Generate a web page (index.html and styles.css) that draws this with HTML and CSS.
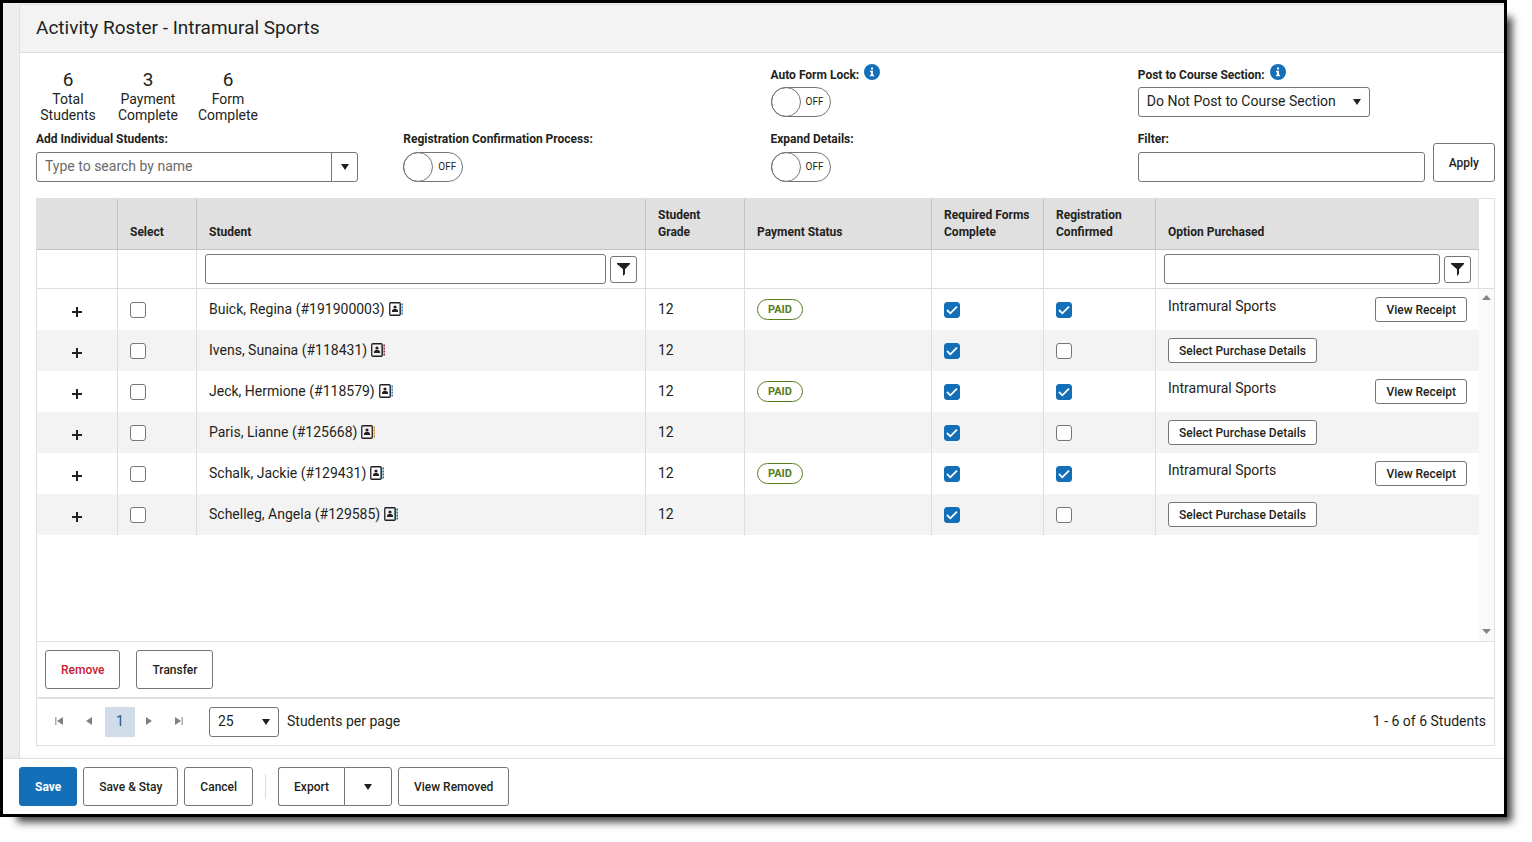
FILE: index.html
```html
<!DOCTYPE html>
<html lang="en">
<head>
<meta charset="utf-8">
<title>Activity Roster - Intramural Sports</title>
<link rel="stylesheet" href="styles.css">
</head>
<body>
<svg class="sprite" aria-hidden="true">
  <symbol id="info" viewBox="0 0 16 16"><circle cx="8" cy="8" r="8" fill="#146fb9"/><path d="M7 3.6h2v2H7zM6 6.800h3v4h1.100v1.400H5.900v-1.400H7V8.200H6z" fill="#fff"/></symbol>
  <symbol id="caret" viewBox="0 0 8 6"><path d="M0 0h8L4 6z" fill="currentColor"/></symbol>
  <symbol id="scroll" viewBox="0 0 9 5"><path d="M0 0h9L4.500 5z" fill="currentColor"/></symbol>
  <symbol id="funnel" viewBox="0 0 13 13"><path d="M0 0h13v1L8 6.200V11l-2 2V6.200L0 1z" fill="currentColor"/></symbol>
  <symbol id="plus" viewBox="0 0 10 10"><path d="M4 0h2v4h4v2H6v4H4V6H0V4h4z" fill="currentColor"/></symbol>
  <symbol id="contact" viewBox="0 0 14 14"><rect x=".75" y=".75" width="10.500" height="12.500" rx="1" fill="none" stroke="#231f20" stroke-width="1.300"/><circle cx="6" cy="5" r="1.600" fill="#231f20"/><path d="M3 10V9c0-1.400 1.300-2 3-2s3 .6 3 2v1z" fill="#231f20"/><path d="M10.400 1.500v11" stroke="currentColor" stroke-width=".6"/><path d="M13.200 1.500v2M13.200 4.500v2M13.200 7.500v2M13.200 10.500v2" stroke="currentColor" stroke-width="1.600"/></symbol>
  <symbol id="prev" viewBox="0 0 8 8"><path d="M7 0v8L1 4z" fill="currentColor"/></symbol>
  <symbol id="next" viewBox="0 0 8 8"><path d="M1 0v8l6-4z" fill="currentColor"/></symbol>
  <symbol id="first" viewBox="0 0 8 8"><path d="M8 0v8L2 4z" fill="currentColor"/><path d="M0 0h1.500v8H0z" fill="#aaa"/></symbol>
  <symbol id="last" viewBox="0 0 8 8"><path d="M0 0v8l6-4z" fill="currentColor"/><path d="M6.500 0H8v8H6.500z" fill="#aaa"/></symbol>
</svg>
<div class="window">
  <main class="card">
    <header class="card-head"><h1>Activity Roster - Intramural Sports</h1></header>
    <section class="controls">
      <div class="stats">
        <div class="stat"><strong>6</strong>Total Students</div>
        <div class="stat"><strong>3</strong>Payment Complete</div>
        <div class="stat"><strong>6</strong>Form Complete</div>
      </div>
      <div class="field top third">
        <div class="label-row"><label for="lock">Auto Form Lock:</label><svg class="info"><use href="#info"/></svg></div>
        <div class="switch"><input type="checkbox" role="switch" id="lock"><span>OFF</span></div>
      </div>
      <div class="field top">
        <div class="label-row"><label for="post">Post to Course Section:</label><svg class="info"><use href="#info"/></svg></div>
        <div class="select post"><select id="post"><option>Do Not Post to Course Section</option></select><svg class="caret"><use href="#caret"/></svg></div>
      </div>
      <div class="field">
        <label for="add">Add Individual Students:</label>
        <div class="combo"><input type="text" id="add" placeholder="Type to search by name"><button type="button" aria-label="Show students"><svg class="caret"><use href="#caret"/></svg></button></div>
      </div>
      <div class="field">
        <label for="reg">Registration Confirmation Process:</label>
        <div class="switch"><input type="checkbox" role="switch" id="reg"><span>OFF</span></div>
      </div>
      <div class="field">
        <label for="expand">Expand Details:</label>
        <div class="switch"><input type="checkbox" role="switch" id="expand"><span>OFF</span></div>
      </div>
      <div class="filter">
        <div class="field grow"><label for="filter">Filter:</label><input class="box" type="text" id="filter"></div>
        <button type="button" class="btn">Apply</button>
      </div>
    </section>

    <section class="roster">
      <div class="roster-body">
        <div class="table-wrap">
          <table>
            <colgroup><col class="c-plus"><col class="c-select"><col><col class="c-grade"><col class="c-pay"><col class="c-flag"><col class="c-flag"><col class="c-option"></colgroup>
            <thead>
              <tr class="heads"><th></th><th>Select</th><th>Student</th><th>Student<br>Grade</th><th>Payment Status</th><th>Required Forms Complete</th><th>Registration Confirmed</th><th>Option Purchased</th></tr>
              <tr class="filters"><td></td><td></td>
                <td><div class="col-filter"><input class="box" type="text" aria-label="Filter by student"><button type="button" aria-label="Student filter"><svg><use href="#funnel"/></svg></button></div></td>
                <td></td><td></td><td></td><td></td>
                <td><div class="col-filter"><input class="box" type="text" aria-label="Filter by option"><button type="button" aria-label="Option filter"><svg><use href="#funnel"/></svg></button></div></td></tr>
            </thead>
            <tbody>
              <tr><td class="plus"><button type="button" aria-label="Expand row"><svg><use href="#plus"/></svg></button></td><td><input type="checkbox" aria-label="Select Buick, Regina"></td><td class="text">Buick, Regina (#191900003)<svg class="contact blue"><use href="#contact"/></svg></td><td class="text">12</td><td><span class="paid">PAID</span></td><td><input type="checkbox" checked aria-label="Forms complete"></td><td><input type="checkbox" checked aria-label="Confirmed"></td><td><div class="option"><span>Intramural Sports</span><button type="button" class="small">View Receipt</button></div></td></tr>
              <tr><td class="plus"><button type="button" aria-label="Expand row"><svg><use href="#plus"/></svg></button></td><td><input type="checkbox" aria-label="Select Ivens, Sunaina"></td><td class="text">Ivens, Sunaina (#118431)<svg class="contact plum"><use href="#contact"/></svg></td><td class="text">12</td><td></td><td><input type="checkbox" checked aria-label="Forms complete"></td><td><input type="checkbox" aria-label="Confirmed"></td><td><div class="option"><button type="button" class="small">Select Purchase Details</button></div></td></tr>
              <tr><td class="plus"><button type="button" aria-label="Expand row"><svg><use href="#plus"/></svg></button></td><td><input type="checkbox" aria-label="Select Jeck, Hermione"></td><td class="text">Jeck, Hermione (#118579)<svg class="contact blue"><use href="#contact"/></svg></td><td class="text">12</td><td><span class="paid">PAID</span></td><td><input type="checkbox" checked aria-label="Forms complete"></td><td><input type="checkbox" checked aria-label="Confirmed"></td><td><div class="option"><span>Intramural Sports</span><button type="button" class="small">View Receipt</button></div></td></tr>
              <tr><td class="plus"><button type="button" aria-label="Expand row"><svg><use href="#plus"/></svg></button></td><td><input type="checkbox" aria-label="Select Paris, Lianne"></td><td class="text">Paris, Lianne (#125668)<svg class="contact amber"><use href="#contact"/></svg></td><td class="text">12</td><td></td><td><input type="checkbox" checked aria-label="Forms complete"></td><td><input type="checkbox" aria-label="Confirmed"></td><td><div class="option"><button type="button" class="small">Select Purchase Details</button></div></td></tr>
              <tr><td class="plus"><button type="button" aria-label="Expand row"><svg><use href="#plus"/></svg></button></td><td><input type="checkbox" aria-label="Select Schalk, Jackie"></td><td class="text">Schalk, Jackie (#129431)<svg class="contact teal"><use href="#contact"/></svg></td><td class="text">12</td><td><span class="paid">PAID</span></td><td><input type="checkbox" checked aria-label="Forms complete"></td><td><input type="checkbox" checked aria-label="Confirmed"></td><td><div class="option"><span>Intramural Sports</span><button type="button" class="small">View Receipt</button></div></td></tr>
              <tr><td class="plus"><button type="button" aria-label="Expand row"><svg><use href="#plus"/></svg></button></td><td><input type="checkbox" aria-label="Select Schelleg, Angela"></td><td class="text">Schelleg, Angela (#129585)<svg class="contact teal"><use href="#contact"/></svg></td><td class="text">12</td><td></td><td><input type="checkbox" checked aria-label="Forms complete"></td><td><input type="checkbox" aria-label="Confirmed"></td><td><div class="option"><button type="button" class="small">Select Purchase Details</button></div></td></tr>
            </tbody>
          </table>
        </div>
        <div class="gutter">
          <div class="gutter-head"></div>
          <div class="track"><svg class="up"><use href="#scroll"/></svg><svg><use href="#scroll"/></svg></div>
        </div>
      </div>
      <div class="toolbar">
        <button type="button" class="btn danger">Remove</button>
        <button type="button" class="btn">Transfer</button>
      </div>
      <nav class="pager" aria-label="Pages">
        <button type="button" aria-label="First page"><svg><use href="#first"/></svg></button>
        <button type="button" aria-label="Previous page"><svg><use href="#prev"/></svg></button>
        <button type="button" class="current">1</button>
        <button type="button" aria-label="Next page"><svg><use href="#next"/></svg></button>
        <button type="button" aria-label="Last page"><svg><use href="#last"/></svg></button>
        <div class="select size"><select id="size"><option>25</option></select><svg class="caret"><use href="#caret"/></svg></div>
        <label for="size">Students per page</label>
        <span class="count">1 - 6 of 6 Students</span>
      </nav>
    </section>
  </main>
  <footer class="actions">
    <button type="button" class="btn primary">Save</button>
    <button type="button" class="btn">Save &amp; Stay</button>
    <button type="button" class="btn">Cancel</button>
    <span class="divider"></span>
    <div class="split"><button type="button" class="btn">Export</button><button type="button" class="btn more" aria-label="More export options"><svg class="caret"><use href="#caret"/></svg></button></div>
    <button type="button" class="btn">View Removed</button>
  </footer>
</div>
</body>
</html>
```

FILE: styles.css
```css
*, *::before { box-sizing: border-box; }

body {
  margin: 0;
  background: #fff;
  color: #231f20;
  font: 14px/18px Roboto, "Liberation Sans", sans-serif;
}

button, input, select { font: inherit; color: inherit; margin: 0; }
button { padding: 0; border: 0; background: none; cursor: pointer; }
svg { display: block; flex: none; }
.sprite { position: absolute; width: 0; height: 0; }

.window {
  display: flex;
  flex-direction: column;
  min-height: calc(100vh - 25px);
  margin: 0 25px 25px 0;
  border: 3px solid #000;
  background: #eee;
  box-shadow: 11px 11px 8px -6px rgba(0, 0, 0, .75);
}

.card {
  display: flex;
  flex: 1;
  flex-direction: column;
  margin: 1px 0 0 16px;
  padding-bottom: 12px;
  border: 1px solid #e0e0e0;
  border-width: 1px 0 0 1px;
  border-radius: 4px 0 0 0;
  background: #fff;
}

.card-head { padding: 11px 16px 12px; border-bottom: 1px solid #dcdcdc; background: #f3f3f3; border-radius: 4px 0 0 0; }
h1 { margin: 0; font-size: 19px; font-weight: 400; line-height: 24px; }

/* Controls */
.controls {
  display: grid;
  grid-template-columns: repeat(4, 1fr);
  gap: 8px 1px;
  padding: 11px 0 16px 16px;
}
.stats { display: flex; gap: 16px; padding-top: 5px; }
.stat { width: 64px; text-align: center; line-height: 16px; }
.stat strong { display: block; font-size: 19px; font-weight: 400; line-height: 22px; }
.third { grid-column: 3; }
.field { display: flex; flex-direction: column; align-items: flex-start; gap: 5px; }
.field.top { gap: 4px; }
.field.grow { flex: 1; }
.field label { font-size: 12px; font-weight: 700; line-height: 16px; }
.label-row { display: flex; align-items: flex-end; gap: 5px; height: 19px; }
.info { width: 16px; height: 16px; align-self: flex-start; }
.caret { width: 8px; height: 6px; }

.box { width: 100%; height: 30px; padding: 0 8px; border: 1px solid #767676; border-radius: 3px; background: #fff; }

.switch { display: grid; width: 60px; height: 30px; }
.switch input, .switch span { grid-area: 1 / 1; }
.switch input { appearance: none; width: 60px; height: 30px; border: 1px solid #767676; border-radius: 15px; background: #fff; }
.switch input::before { content: ""; display: block; width: 30px; height: 30px; margin: -1px; border: 1px solid #767676; border-radius: 50%; }
.switch span { align-self: center; justify-self: end; padding-right: 7px; font-size: 10px; pointer-events: none; }

.select { display: grid; align-items: center; height: 30px; }
.select select, .select svg { grid-area: 1 / 1; }
.select select { appearance: none; width: 100%; height: 30px; padding: 0 32px 2px 8px; border: 1px solid #767676; border-radius: 3px; background: #fff; }
.select svg { justify-self: end; margin-right: 9px; pointer-events: none; }
.post { width: 232px; }
.size { width: 70px; margin: 0 8px 0 14px; }

.combo { display: flex; width: calc(100% - 44px); height: 30px; border: 1px solid #767676; border-radius: 3px; }
.combo input { flex: 1; min-width: 0; padding: 0 8px 2px; border: 0; background: none; }
.combo input::placeholder { color: #6b6b6b; opacity: 1; }
.combo button { display: grid; place-items: center; width: 26px; border-left: 1px solid #767676; }

.filter { display: flex; align-items: flex-end; gap: 8px; padding-right: 9px; }

.btn { height: 39px; padding: 0 15px; border: 1px solid #767676; border-radius: 3px; background: #fff; font-size: 12px; font-weight: 500; white-space: nowrap; }
.btn.danger { color: #c8202f; }
.btn.primary { border-color: #146fb9; background: #146fb9; color: #fff; font-weight: 700; }

/* Roster grid */
.roster { display: flex; flex: 1; flex-direction: column; margin: 0 9px 0 16px; border: 1px solid #e0e0e0; }
.roster-body { display: flex; flex: 1; }
.table-wrap { flex: 1; min-width: 0; }
table { width: 100%; table-layout: fixed; border-collapse: separate; border-spacing: 0; }
.c-plus { width: 81px; }
.c-select { width: 79px; }
.c-grade { width: 99px; }
.c-pay { width: 187px; }
.c-flag { width: 112px; }
.c-option { width: 323px; }

th, td { padding: 8px 12px; border-right: 1px solid #dedede; text-align: left; vertical-align: middle; }
.heads th { height: 51px; padding: 8px 12px; border-right-color: #c2c2c2; border-bottom: 1px solid #c2c2c2; background: #e0e0e0; font-size: 12px; font-weight: 700; line-height: 17px; vertical-align: bottom; }
.filters td { height: 39px; padding: 4px 8px; border-bottom: 1px solid #dedede; }
th:last-child, tbody td:last-child { border-right: 0; }
.filters td:last-child { padding-right: 7px; }
.col-filter { display: flex; align-items: center; gap: 4px; }
.col-filter button { display: grid; flex: none; place-items: center; width: 27px; height: 27px; border: 1px solid #767676; border-radius: 3px; }
.col-filter svg { width: 13px; height: 13px; }

tbody td { height: 41px; white-space: nowrap; }
tbody tr:nth-child(even) { background: #f3f3f3; }
.text { padding: 7px 12px 9px; }
.plus { padding-top: 10px; text-align: center; }
.plus button { vertical-align: middle; }
.plus svg { width: 10px; height: 10px; }
.contact { display: inline-block; width: 14px; height: 14px; margin-left: 4px; vertical-align: -2px; }
.blue { color: #2f86d0; }
.plum { color: #8b2f5c; }
.amber { color: #d98a2b; }
.teal { color: #2f6f80; }

td input[type="checkbox"] { appearance: none; display: block; width: 16px; height: 16px; border: 1px solid #767676; border-radius: 3px; background: #fff; }
td input[type="checkbox"]:checked {
  border-color: #146fb9;
  background: #146fb9 url("data:image/svg+xml,%3Csvg xmlns='http://www.w3.org/2000/svg' viewBox='0 0 14 14'%3E%3Cpath d='M2 7l3.300 3.300L12 3.600' fill='none' stroke='white' stroke-width='1.800'/%3E%3C/svg%3E") center / 14px 14px no-repeat;
}
.paid { display: block; width: 46px; height: 21px; border: 1px solid #567d1e; border-radius: 11px; background: #fff; color: #567d1e; font-size: 11px; font-weight: 700; line-height: 19px; text-align: center; }
.option { display: flex; align-items: flex-start; justify-content: space-between; }
.small { height: 25px; padding: 0 10px; border: 1px solid #767676; border-radius: 3px; background: #fff; font-size: 12px; font-weight: 500; }

.gutter { display: flex; flex: none; flex-direction: column; width: 15px; }
.gutter-head { height: 90px; border-bottom: 1px solid #dedede; }
.track { display: flex; flex: 1; flex-direction: column; align-items: center; justify-content: space-between; padding: 6px 0 7px; background: #fafafa; color: #858585; }
.track svg { width: 9px; height: 5px; }
.track .up { transform: rotate(180deg); }

.toolbar { display: flex; gap: 16px; padding: 8px; border-top: 1px solid #e0e0e0; }
.pager { display: flex; align-items: center; padding: 8px; border-top: 2px solid #e0e0e0; }
.pager button { display: grid; place-items: center; width: 30px; height: 30px; padding: 0 2px 2px 0; color: #808080; }
.pager button svg { width: 8px; height: 8px; }
.pager .current { padding: 0 0 2px; background: #d0dde8; color: #1d5584; }
.pager label, .count { padding-bottom: 2px; }
.count { margin-left: auto; }

/* Page actions */
.actions { display: flex; align-items: center; gap: 6px; padding: 8px 16px; border-top: 1px solid #e0e0e0; background: #fff; box-shadow: 0 -1px 4px rgba(0, 0, 0, .04); }
.divider { width: 1px; height: 25px; margin: 0 6px; background: #dcdcdc; }
.split { display: flex; }
.split .btn:first-child { border-right: 0; border-radius: 3px 0 0 3px; }
.split .more { display: grid; place-items: center; width: 48px; border-radius: 0 3px 3px 0; }
```
